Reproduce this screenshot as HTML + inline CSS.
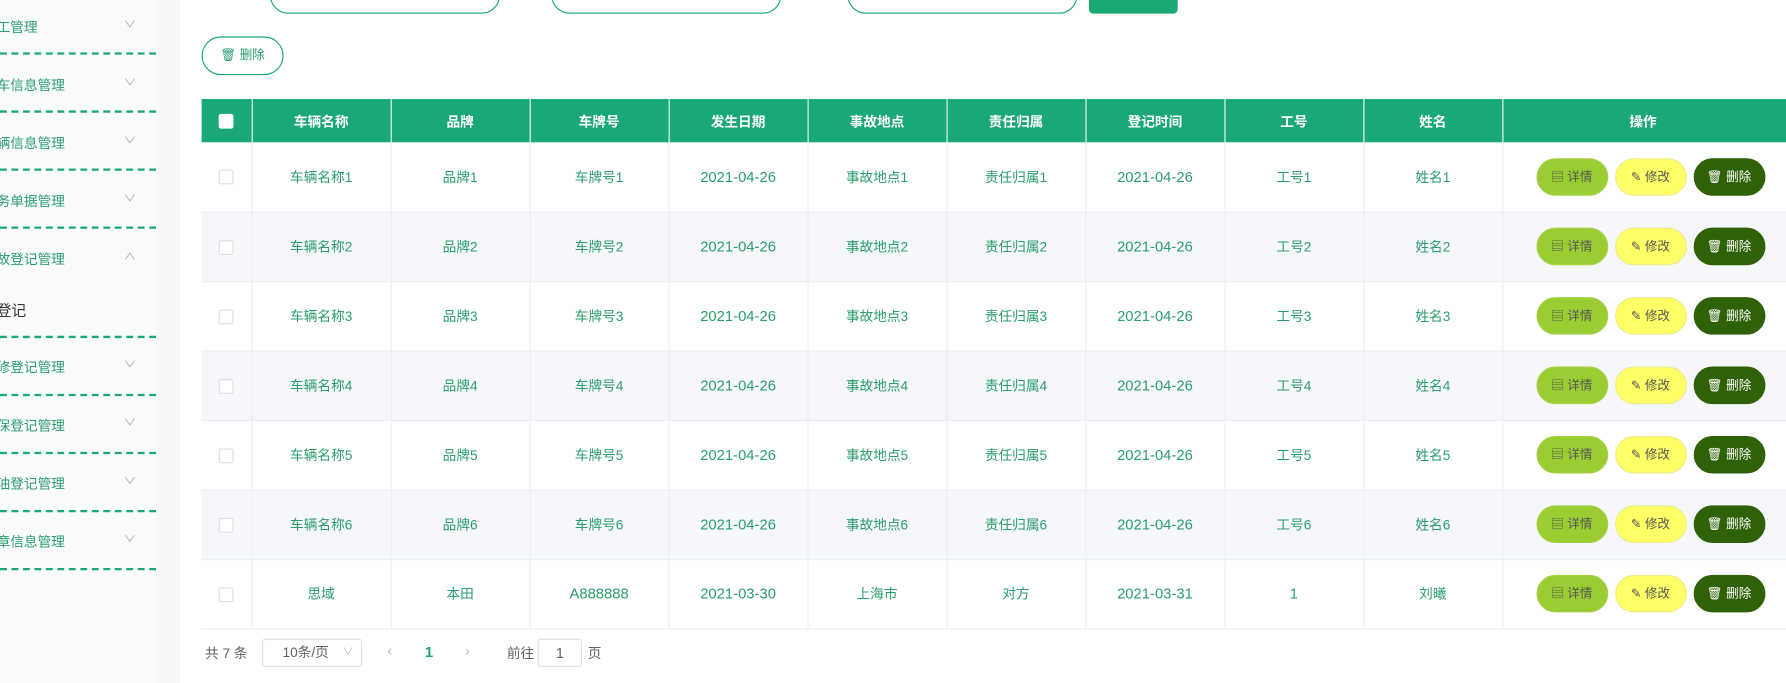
<!DOCTYPE html>
<html><head><meta charset="utf-8"><style>
*{margin:0;padding:0;box-sizing:border-box}
html,body{width:1786px;height:683px;overflow:hidden;background:#fff}
#w{position:absolute;left:0;top:0;width:1568px;height:600px;transform:scale(1.1390,1.1383);transform-origin:0 0;font-family:"Liberation Sans","Noto Sans CJK SC",sans-serif;font-size:13px;color:#2a9d6e}
.side{position:absolute;left:0;top:0;width:137px;height:600px;background:#fafbfc}
.gap{position:absolute;left:137px;top:0;width:21px;height:600px;background:#f7f8f9}
.mi{position:absolute;left:-3px;width:140px;font-size:12px;color:#2a9d6e;line-height:16px}
.mi i{position:absolute;left:113px;top:-2px;font-style:normal;color:#aaa;font-size:8px;transform:scaleX(1.4)}
.dash{position:absolute;left:0;width:137px;border-top:2px dashed #1aa874}
.inp{position:absolute;top:-20px;height:32px;border:1px solid #1aa874;border-radius:16px;background:#fff}
.abs{position:absolute}
table{position:absolute;left:177px;top:87px;border-collapse:collapse;table-layout:fixed;width:1420px}
th{background:#1aa87a;color:#fff;font-weight:bold;height:38px;font-size:12px;border-right:1px solid #e6f5ee}
td{height:61px;text-align:center;vertical-align:middle;border-right:1px solid #ebeef5;border-bottom:1px solid #ebeef5;font-size:12px;color:#2a9d6e}
td.d{font-size:13px}
tr:nth-child(odd) td{background:#f5f7fa}
.cb{display:inline-block;width:13px;height:13px;border:1px solid #dcdfe6;background:#fff;border-radius:2px;vertical-align:middle}
.b{display:inline-block;width:63px;height:33px;line-height:33px;border-radius:17px;font-size:11px;margin:0 3px;vertical-align:middle;text-align:center}
.b1{background:#9acd32;color:#555;border:1px solid #a5d046}
.b2{background:#ffff66;color:#555;border:1px solid #ecec8a}
.b3{background:#2f6107;color:#fff;border:1px solid #2f6107}
.op{text-align:left;padding-left:26px}
</style></head><body><div id="w">
<div class="side"></div><div class="gap"></div>
<div class="mi" style="top:16px">工管理<i>∨</i></div><div class="dash" style="top:46px"></div>
<div class="mi" style="top:67px">车信息管理<i>∨</i></div><div class="dash" style="top:97px"></div>
<div class="mi" style="top:118px">辆信息管理<i>∨</i></div><div class="dash" style="top:148px"></div>
<div class="mi" style="top:169px">务单据管理<i>∨</i></div><div class="dash" style="top:199px"></div>
<div class="mi" style="top:220px">故登记管理<i>∧</i></div>
<div class="mi" style="top:265px;color:#333;font-size:13px">登记</div><div class="dash" style="top:295px"></div>
<div class="mi" style="top:315px">修登记管理<i>∨</i></div><div class="dash" style="top:346px"></div>
<div class="mi" style="top:366px">保登记管理<i>∨</i></div><div class="dash" style="top:397px"></div>
<div class="mi" style="top:417px">油登记管理<i>∨</i></div><div class="dash" style="top:448px"></div>
<div class="mi" style="top:468px">章信息管理<i>∨</i></div><div class="dash" style="top:499px"></div>

<div class="inp" style="left:237px;width:202px"></div>
<div class="inp" style="left:484px;width:202px"></div>
<div class="inp" style="left:744px;width:202px"></div>
<div class="abs" style="left:956px;top:-10px;width:78px;height:22px;background:#1aa874;border-radius:4px"></div>
<div class="abs" style="left:177px;top:32px;width:72px;height:34px;border:1px solid #1aa874;border-radius:17px;font-size:11px;line-height:32px;text-align:center;color:#2a9d6e">🗑 删除</div>

<table>
<colgroup><col style="width:44px"><col style="width:122px"><col style="width:122px"><col style="width:122px"><col style="width:122px"><col style="width:122px"><col style="width:122px"><col style="width:122px"><col style="width:122px"><col style="width:122px"><col style="width:278px"></colgroup>
<tr><th><span class="cb" style="border:none"></span></th><th>车辆名称</th><th>品牌</th><th>车牌号</th><th>发生日期</th><th>事故地点</th><th>责任归属</th><th>登记时间</th><th>工号</th><th>姓名</th><th style="text-align:left;padding-left:111px">操作</th></tr>
<tr><td><span class="cb"></span></td><td>车辆名称1</td><td>品牌1</td><td>车牌号1</td><td class="d">2021-04-26</td><td>事故地点1</td><td>责任归属1</td><td class="d">2021-04-26</td><td>工号1</td><td>姓名1</td><td class="op"><span class="b b1">▤ 详情</span><span class="b b2">✎ 修改</span><span class="b b3">🗑 删除</span></td></tr>
<tr><td><span class="cb"></span></td><td>车辆名称2</td><td>品牌2</td><td>车牌号2</td><td class="d">2021-04-26</td><td>事故地点2</td><td>责任归属2</td><td class="d">2021-04-26</td><td>工号2</td><td>姓名2</td><td class="op"><span class="b b1">▤ 详情</span><span class="b b2">✎ 修改</span><span class="b b3">🗑 删除</span></td></tr>
<tr><td><span class="cb"></span></td><td>车辆名称3</td><td>品牌3</td><td>车牌号3</td><td class="d">2021-04-26</td><td>事故地点3</td><td>责任归属3</td><td class="d">2021-04-26</td><td>工号3</td><td>姓名3</td><td class="op"><span class="b b1">▤ 详情</span><span class="b b2">✎ 修改</span><span class="b b3">🗑 删除</span></td></tr>
<tr><td><span class="cb"></span></td><td>车辆名称4</td><td>品牌4</td><td>车牌号4</td><td class="d">2021-04-26</td><td>事故地点4</td><td>责任归属4</td><td class="d">2021-04-26</td><td>工号4</td><td>姓名4</td><td class="op"><span class="b b1">▤ 详情</span><span class="b b2">✎ 修改</span><span class="b b3">🗑 删除</span></td></tr>
<tr><td><span class="cb"></span></td><td>车辆名称5</td><td>品牌5</td><td>车牌号5</td><td class="d">2021-04-26</td><td>事故地点5</td><td>责任归属5</td><td class="d">2021-04-26</td><td>工号5</td><td>姓名5</td><td class="op"><span class="b b1">▤ 详情</span><span class="b b2">✎ 修改</span><span class="b b3">🗑 删除</span></td></tr>
<tr><td><span class="cb"></span></td><td>车辆名称6</td><td>品牌6</td><td>车牌号6</td><td class="d">2021-04-26</td><td>事故地点6</td><td>责任归属6</td><td class="d">2021-04-26</td><td>工号6</td><td>姓名6</td><td class="op"><span class="b b1">▤ 详情</span><span class="b b2">✎ 修改</span><span class="b b3">🗑 删除</span></td></tr>
<tr><td><span class="cb"></span></td><td>思域</td><td>本田</td><td class="d">A888888</td><td class="d">2021-03-30</td><td>上海市</td><td>对方</td><td class="d">2021-03-31</td><td class="d">1</td><td>刘曦</td><td class="op"><span class="b b1">▤ 详情</span><span class="b b2">✎ 修改</span><span class="b b3">🗑 删除</span></td></tr>
</table>

<div class="abs" style="left:180px;top:565px;color:#606266;font-size:12px">共 7 条</div>
<div class="abs" style="left:230px;top:561px;width:88px;height:25px;border:1px solid #dcdfe6;border-radius:3px;color:#606266;font-size:12px;line-height:23px;padding-left:17px">10条/页<span style="position:absolute;left:70px;color:#bbb;font-size:9px">∨</span></div>
<div class="abs" style="left:340px;top:564px;color:#bbb">‹</div>
<div class="abs" style="left:373px;top:565px;color:#1aa874;font-weight:bold">1</div>
<div class="abs" style="left:408px;top:564px;color:#bbb">›</div>
<div class="abs" style="left:445px;top:565px;color:#606266;font-size:12px">前往</div>
<div class="abs" style="left:472px;top:561px;width:39px;height:25px;border:1px solid #dcdfe6;border-radius:3px;text-align:center;line-height:23px;color:#606266">1</div>
<div class="abs" style="left:516px;top:565px;color:#606266;font-size:12px">页</div>
</div></body></html>
